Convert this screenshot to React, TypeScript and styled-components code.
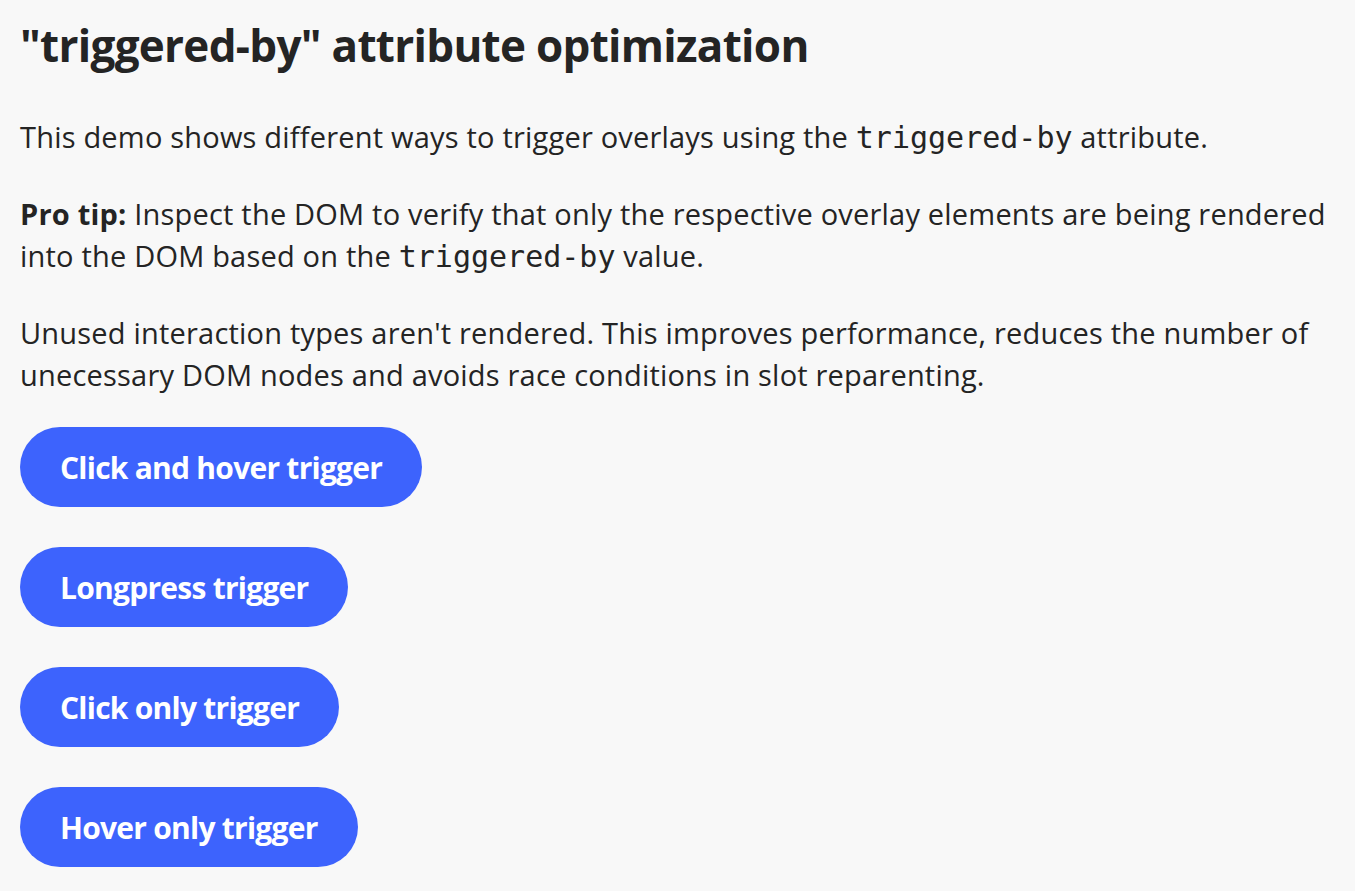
import React from "react";
import styled, { createGlobalStyle } from "styled-components";

const Global = createGlobalStyle`
  html, body { margin: 0; padding: 0; background: #f8f8f8; }
  body { font-family: "Open Sans", "Noto Sans", sans-serif; color: #242424; }
`;

const Page = styled.main`
  padding: 14px 20px 20px 20px;
  display: flex;
  flex-direction: column;
`;

const Title = styled.h1`
  margin: 0 0 40px 0;
  font-size: 44px;
  line-height: 62px;
  font-weight: 700;
  letter-spacing: -0.7px;
  color: #242424;
`;

const Para = styled.p`
  margin: 0 0 34px 0;
  font-size: 29px;
  line-height: 42px;
  letter-spacing: 0.2px;
  color: #242424;
`;

const Code = styled.code`
  font-family: "DejaVu Sans Mono", "Liberation Mono", monospace;
  font-size: 30px;
  letter-spacing: 0;
`;

const Buttons = styled.div`
  display: flex;
  flex-direction: column;
  align-items: flex-start;
  gap: 40px;
  margin-top: -3px;
`;

const Button = styled.button`
  height: 80px;
  padding: 0 40px;
  border: none;
  border-radius: 40px;
  background: #3d63fd;
  color: #ffffff;
  font-family: "Open Sans", "Noto Sans", sans-serif;
  font-size: 30px;
  font-weight: 700;
  letter-spacing: -0.75px;
  cursor: pointer;
`;

export default function App() {
  return (
    <>
      <Global />
      <Page>
        <Title>"triggered-by" attribute optimization</Title>
        <Para>
          This demo shows different ways to trigger overlays using the <Code>triggered-by</Code> attribute.
        </Para>
        <Para>
          <strong>Pro tip:</strong> Inspect the DOM to verify that only the respective overlay elements are being rendered
          into the DOM based on the <Code>triggered-by</Code> value.
        </Para>
        <Para>
          Unused interaction types aren't rendered. This improves performance, reduces the number of unecessary DOM
          nodes and avoids race conditions in slot reparenting.
        </Para>
        <Buttons>
          <Button>Click and hover trigger</Button>
          <Button>Longpress trigger</Button>
          <Button>Click only trigger</Button>
          <Button>Hover only trigger</Button>
        </Buttons>
      </Page>
    </>
  );
}
